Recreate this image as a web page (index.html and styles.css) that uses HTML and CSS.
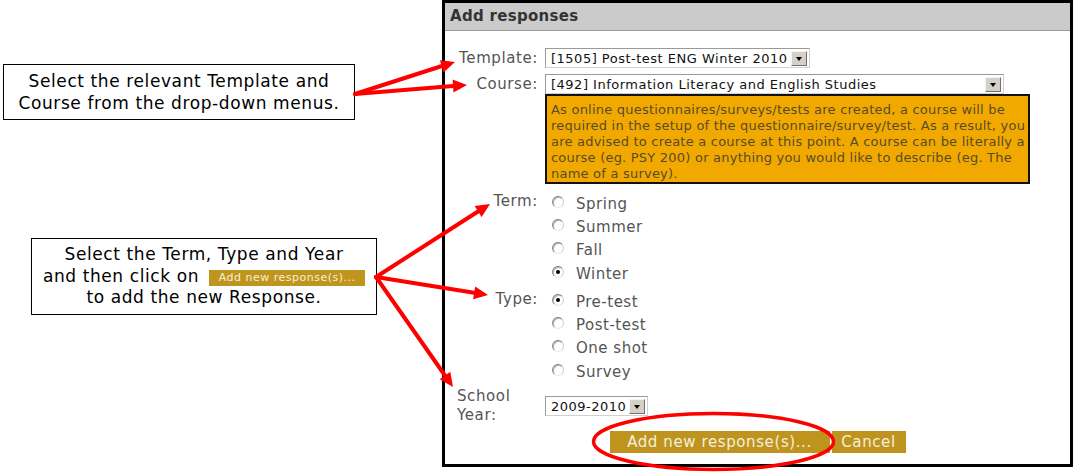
FILE: index.html
```html
<!DOCTYPE html>
<html>
<head>
<meta charset="utf-8">
<link rel="stylesheet" href="styles.css">
</head>
<body>
<div class="page">
  <div class="notes">
    <div class="note note-1">Select the relevant Template and<br>Course from the drop-down menus.</div>
    <div class="note note-2">Select the Term, Type and Year<br>and then click on <span class="mini-btn">Add new response(s)...</span><br>to add the new Response.</div>
  </div>
  <div class="dialog">
    <div class="dialog-title">Add responses</div>
    <div class="form">
      <div class="row row-template">
        <div class="label">Template:</div>
        <div class="control">
          <div class="select sel-template"><span class="sel-text">[1505] Post-test ENG Winter 2010</span><span class="sel-btn"></span></div>
        </div>
      </div>
      <div class="row row-course">
        <div class="label">Course:</div>
        <div class="control">
          <div class="select sel-course"><span class="sel-text">[492] Information Literacy and English Studies</span><span class="sel-btn"></span></div>
          <div class="hint">As online questionnaires/surveys/tests are created, a course will be<br>required in the setup of the questionnaire/survey/test. As a result, you<br>are advised to create a course at this point. A course can be literally a<br>course (eg. PSY 200) or anything you would like to describe (eg. The<br>name of a survey).</div>
        </div>
      </div>
      <div class="row row-term">
        <div class="label label-top">Term:</div>
        <div class="control radios">
          <div class="radio-row"><span class="radio"></span><span>Spring</span></div>
          <div class="radio-row"><span class="radio"></span><span>Summer</span></div>
          <div class="radio-row"><span class="radio"></span><span>Fall</span></div>
          <div class="radio-row"><span class="radio checked"></span><span>Winter</span></div>
        </div>
      </div>
      <div class="row row-type">
        <div class="label label-top">Type:</div>
        <div class="control radios">
          <div class="radio-row"><span class="radio checked"></span><span>Pre-test</span></div>
          <div class="radio-row"><span class="radio"></span><span>Post-test</span></div>
          <div class="radio-row"><span class="radio"></span><span>One shot</span></div>
          <div class="radio-row"><span class="radio"></span><span>Survey</span></div>
        </div>
      </div>
      <div class="row row-year">
        <div class="label label-year">School Year:</div>
        <div class="control control-year">
          <div class="select sel-year"><span class="sel-text">2009-2010</span><span class="sel-btn"></span></div>
        </div>
      </div>
      <div class="buttons">
        <span class="btn btn-add">Add new response(s)...</span>
        <span class="btn btn-cancel">Cancel</span>
      </div>
    </div>
  </div>
  <svg class="overlay" width="1076" height="475" viewBox="0 0 1076 475">
    <g stroke="#ff0000" stroke-width="4" stroke-linecap="round" fill="none">
      <line x1="355" y1="94" x2="442" y2="66"/>
      <line x1="355" y1="94" x2="453" y2="86"/>
      <line x1="376" y1="277" x2="478" y2="211.5"/>
      <line x1="376" y1="277" x2="474" y2="292.8"/>
      <line x1="376" y1="277" x2="445" y2="375.5"/>
      <ellipse cx="713.5" cy="441.5" rx="120" ry="28" stroke-width="3.5"/>
    </g>
    <g fill="#ff0000">
      <polygon points="455,62 443.5,72.5 439.9,60.2"/>
      <polygon points="467,85 453.5,92.6 452.6,79.6"/>
      <polygon points="490,204 481.6,217.1 474.7,206"/>
      <polygon points="488,295 473.1,299.2 475.2,286.4"/>
      <polygon points="453,387 439.7,379.3 450.3,371.8"/>
    </g>
  </svg>
</div>
</body>
</html>
```

FILE: styles.css
```css
* {
  box-sizing: border-box;
}

body {
  margin: 0;
  background: #ffffff;
  font-family: "DejaVu Sans", Verdana, sans-serif;
}

.page {
  position: relative;
  display: flex;
  width: 1076px;
  height: 475px;
}

.notes {
  flex: none;
  width: 442px;
  display: flex;
  flex-direction: column;
  align-items: flex-start;
}

.note {
  border: 1px solid #000;
  text-align: center;
  color: #000;
  font-size: 17px;
  letter-spacing: 0.6px;
  white-space: nowrap;
}

.note-1 {
  margin: 64px 0 0 3px;
  width: 352px;
  height: 56px;
  padding-top: 5px;
  line-height: 22px;
}

.note-2 {
  margin: 118px 0 0 31px;
  width: 346px;
  height: 77px;
  padding-top: 5px;
  line-height: 21.5px;
}

.mini-btn {
  display: inline-block;
  width: 156px;
  height: 16px;
  margin-left: 4px;
  background: #c0951e;
  color: #f3efdc;
  font-size: 11px;
  letter-spacing: 0.5px;
  line-height: 16px;
  text-align: center;
  vertical-align: 1px;
}

.dialog {
  flex: none;
  width: 631px;
  height: 467px;
  border: 3px solid #000;
  background: #fff;
}

.dialog-title {
  height: 28px;
  background: #cbcbcb;
  border-bottom: 1px solid #9a9a9a;
  color: #333;
  font-weight: bold;
  font-size: 15px;
  letter-spacing: 0.3px;
  line-height: 27px;
  padding-left: 5px;
}

.form {
  padding-top: 17px;
}

.row {
  display: grid;
  grid-template-columns: 94px 1fr;
  column-gap: 6px;
}

.label {
  text-align: right;
  color: #555;
  font-size: 15px;
  letter-spacing: 0.6px;
  line-height: 20px;
  padding-right: 1px;
}

.label-top {
  line-height: 18px;
}

.row-course {
  margin-top: 6px;
}

.select {
  display: flex;
  align-items: center;
  justify-content: space-between;
  height: 20px;
  border: 1px solid #9a9a9a;
  border-right-color: #d0d0d0;
  border-bottom-color: #d0d0d0;
  background: #fff;
  padding-left: 5px;
  padding-right: 2px;
}

.sel-text {
  color: #111;
  font-size: 13px;
  letter-spacing: 0.5px;
  white-space: nowrap;
}

.sel-btn {
  position: relative;
  width: 16px;
  height: 15px;
  background: #d4d0c8;
  border: 1px solid;
  border-color: #f4f4f4 #707070 #707070 #f4f4f4;
}

.sel-btn::after {
  content: "";
  position: absolute;
  left: 4px;
  top: 5px;
  border-left: 3.5px solid transparent;
  border-right: 3.5px solid transparent;
  border-top: 4px solid #000;
}

.sel-template {
  width: 265px;
}

.sel-course {
  width: 459px;
}

.sel-year {
  width: 103px;
}

.hint {
  width: 485px;
  height: 90px;
  border: 2px solid #111;
  background: #f1a900;
  color: #5a4b28;
  font-size: 13px;
  letter-spacing: 0.22px;
  line-height: 16px;
  padding: 6px 4px 0 4px;
  white-space: nowrap;
}

.row-term {
  margin-top: 8px;
}

.row-type {
  margin-top: 5px;
}

.radios {
  display: flex;
  flex-direction: column;
}

.radio-row {
  display: flex;
  align-items: center;
  height: 23.3px;
  color: #555;
  font-size: 15px;
  letter-spacing: 0.5px;
}

.radio {
  position: relative;
  flex: none;
  width: 12px;
  height: 12px;
  margin: -4px 12px 0 7px;
  border-radius: 50%;
  border: 1px solid;
  border-color: #7d7d7d #cfcfcf #e8e8e8 #8a8a8a;
  background: #fff;
  box-shadow: inset 1px 1px 0 #b5b5b5;
}

.radio.checked::after {
  content: "";
  position: absolute;
  left: 3px;
  top: 3px;
  width: 4px;
  height: 4px;
  border-radius: 50%;
  background: #000;
}

.row-year {
  margin-top: 4px;
  align-items: center;
}

.label-year {
  text-align: left;
  padding-left: 12px;
  line-height: 19px;
  white-space: normal;
}

.buttons {
  display: flex;
  justify-content: center;
  gap: 2px;
  margin-top: 6px;
}

.btn {
  display: inline-block;
  height: 22px;
  background: #bf941e;
  color: #f4efdc;
  font-size: 15px;
  letter-spacing: 0.6px;
  line-height: 22px;
  text-align: center;
}

.btn-add {
  width: 220px;
}

.btn-cancel {
  width: 74px;
}

.overlay {
  position: absolute;
  left: 0;
  top: 0;
  pointer-events: none;
}
```
